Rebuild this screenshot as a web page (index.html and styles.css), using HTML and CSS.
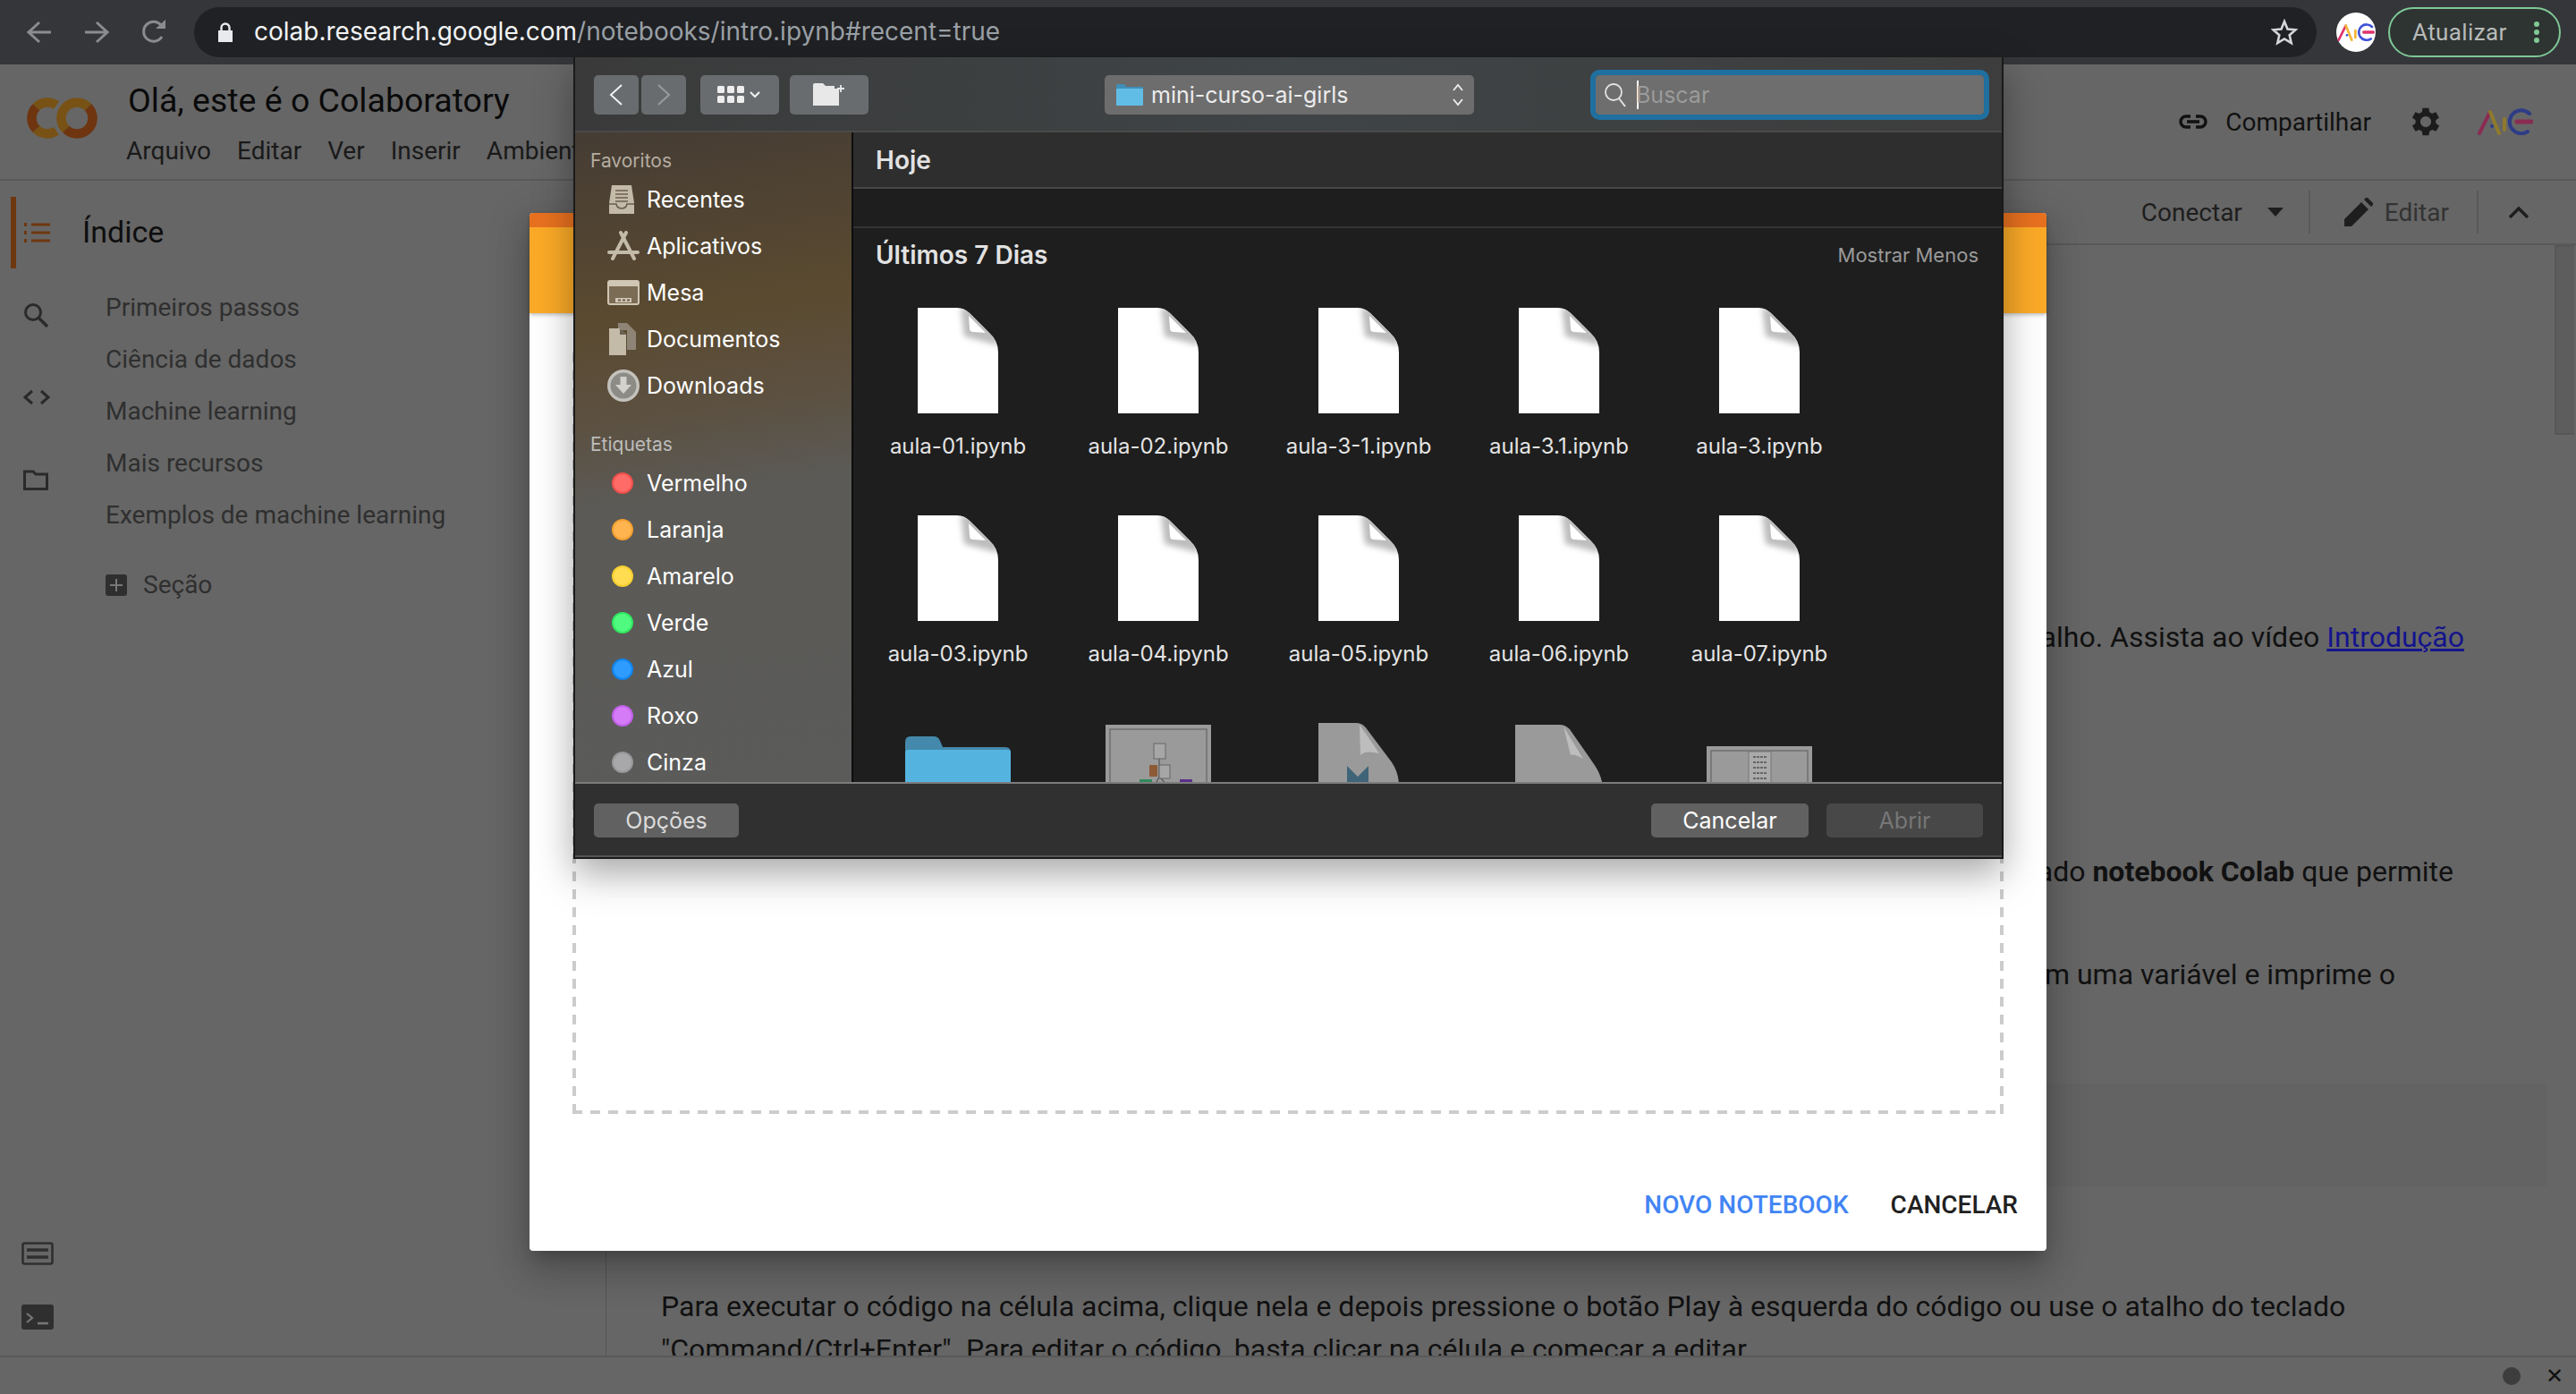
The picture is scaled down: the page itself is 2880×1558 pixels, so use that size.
FILE: index.html
```html
<!DOCTYPE html>
<html lang="pt-BR">
<head>
  <meta charset="UTF-8" />
  <title>Olá, este é o Colaboratory</title>
  <link rel="stylesheet" href="styles.css">
</head>
<body>

  <svg class="defs" width="0" height="0">
    <defs>
      <filter id="soft" x="-30%" y="-30%" width="160%" height="160%"><feGaussianBlur stdDeviation="3"/></filter>
      <clipPath id="docclip"><path d="M0 0H44Q52 0 58 6L80 28Q90 37 90 50V118H0Z"/></clipPath>
    </defs>
    <symbol id="doc" viewBox="0 0 90 118">
      <path d="M0 0H44Q52 0 58 6L80 28Q90 37 90 50V118H0Z" fill="#fff"/>
      <g clip-path="url(#docclip)"><path d="M48 0L52 32L90 42V28L60 0Z" fill="#bdbdbd" filter="url(#soft)"/></g>
      <path d="M57 9L76 28L62 27Q58 27 58 23Z" fill="#fff"/>
    </symbol>
    <symbol id="aic" viewBox="0 0 62 30">
      <path d="M2 28L14 4" fill="none" stroke="var(--a1)" stroke-width="4" stroke-linecap="round"/>
      <path d="M14 4L24 28" fill="none" stroke="var(--a2)" stroke-width="4" stroke-linecap="round"/>
      <circle cx="16" cy="20" r="2" fill="var(--a3)"/>
      <path d="M30 12V24" stroke="var(--a2)" stroke-width="4" stroke-linecap="round"/>
      <path d="M58 6A13 13 0 1 0 56 26" fill="none" stroke="var(--a3)" stroke-width="4" stroke-linecap="round"/>
      <path d="M44 15H60" stroke="var(--a1)" stroke-width="5" stroke-linecap="round"/>
    </symbol>
  </svg>

  <!-- browser bar -->
  <div class="browser-bar">
    <svg class="nav-icon" width="28" height="26" viewBox="0 0 28 26"><path d="M14 2L2 13L14 24M2 13H27"/></svg>
    <svg class="nav-icon" width="28" height="26" viewBox="0 0 28 26"><path d="M14 2L26 13L14 24M26 13H1"/></svg>
    <svg class="nav-icon" width="28" height="28" viewBox="0 0 28 28"><path d="M23 19A11 11 0 1 1 22 6"/><path class="nav-fill" d="M16 10H27V0Z"/></svg>
    <div class="omnibox">
      <svg class="lock" width="16" height="22" viewBox="0 0 16 22"><path d="M0 9H16V22H0Z" fill="#e8eaed"/><path d="M3.500 9V6A4.500 4.500 0 0 1 12.500 6V9" fill="none" stroke="#e8eaed" stroke-width="2.400"/></svg>
      <span class="url"><b>colab.research.google.com</b>/notebooks/intro.ipynb#recent=true</span>
      <svg class="star" width="30" height="30" viewBox="0 0 30 30"><path d="M15 3L18.500 11.500L27.500 12.300L20.700 18.200L22.700 27L15 22.400L7.300 27L9.300 18.200L2.500 12.300L11.500 11.500Z" fill="none" stroke="#d5d6d8" stroke-width="2.600"/></svg>
    </div>
    <div class="avatar">
      <svg class="aic-bright" width="42" height="20"><use href="#aic"/></svg>
    </div>
    <div class="update-pill">
      <span>Atualizar</span>
      <i class="dots"></i>
    </div>
  </div>

  <!-- notebook header -->
  <header class="nb-header">
    <svg class="co-logo" width="80" height="48" viewBox="0 0 80 48" fill="none" stroke-width="10.500">
      <path d="M10.600 11.600A17.500 17.500 0 0 0 10.600 36.400" stroke="#6e3510"/>
      <path d="M33 9.700A17.500 17.500 0 0 0 10.600 11.600M10.600 36.400A17.500 17.500 0 0 0 33 38.300" stroke="#785214"/>
      <path d="M68.400 11.600A17.500 17.500 0 0 1 43.600 36.400" stroke="#6e3510"/>
      <path d="M43.600 36.400A17.500 17.500 0 0 1 68.400 11.600" stroke="#785214"/>
    </svg>
    <div class="nb-title">
      <div class="nb-name">Olá, este é o Colaboratory</div>
      <nav class="nb-menu">
        <span>Arquivo</span>
        <span>Editar</span>
        <span>Ver</span>
        <span>Inserir</span>
        <span>Ambiente de execução</span>
      </nav>
    </div>
    <div class="nb-actions">
      <svg class="link-icon" width="34" height="18" viewBox="0 0 34 18"><path d="M14 3H9A6 6 0 0 0 9 15H14M20 3H25A6 6 0 0 1 25 15H20M10 9H24" fill="none" stroke="#111" stroke-width="3.400"/></svg>
      <span class="share">Compartilhar</span>
      <svg class="gear" width="42" height="42" viewBox="0 0 24 24"><path fill="#1c1c1c" d="M19.400 13a7.500 7.500 0 0 0 0-2l2.100-1.600-2-3.500-2.500 1a7.300 7.300 0 0 0-1.700-1L15 3.300h-4l-.4 2.600a7.300 7.300 0 0 0-1.700 1l-2.500-1-2 3.500L6.500 11a7.500 7.500 0 0 0 0 2l-2.100 1.600 2 3.500 2.500-1c.5.400 1.100.700 1.700 1l.4 2.600h4l.4-2.600c.6-.3 1.200-.6 1.700-1l2.500 1 2-3.500zM13 15.500a3.500 3.500 0 1 1 0-7 3.500 3.500 0 0 1 0 7z" transform="translate(-1 0)"/></svg>
      <svg class="aic-dim" width="62" height="30"><use href="#aic"/></svg>
    </div>
  </header>

  <!-- notebook body -->
  <div class="nb-main">
    <aside class="side">
      <i class="side-marker"></i>
      <div class="side-rail">
        <svg class="rail-list" width="30" height="24" viewBox="0 0 30 24"><path d="M9 3H30M9 12H30M9 21H30" stroke="#6e370f" stroke-width="3"/><path d="M1 3H4M1 12H4M1 21H4" stroke="#6e370f" stroke-width="4"/></svg>
        <svg class="rail-search" width="28" height="28" viewBox="0 0 28 28"><circle cx="11" cy="11" r="8.500" fill="none" stroke="#2a2a2a" stroke-width="3"/><path d="M17 17L27 27" stroke="#2a2a2a" stroke-width="3.400"/></svg>
        <svg class="rail-code" width="30" height="18" viewBox="0 0 30 18"><path d="M10 2L2 9L10 16M20 2L28 9L20 16" fill="none" stroke="#2a2a2a" stroke-width="3"/></svg>
        <svg class="rail-folder" width="28" height="24" viewBox="0 0 28 24"><path d="M1.500 3H11L14 6H26.500V22.500H1.500Z" fill="none" stroke="#2a2a2a" stroke-width="3"/></svg>
        <svg class="rail-snip" width="36" height="26" viewBox="0 0 36 26"><rect x="1.500" y="1.500" width="33" height="23" rx="2" fill="none" stroke="#2f2f2f" stroke-width="2.600"/><path d="M6 9H30M6 17H30" stroke="#2f2f2f" stroke-width="3.400"/></svg>
        <svg class="rail-term" width="36" height="28" viewBox="0 0 36 28"><rect width="36" height="28" rx="3" fill="#2f2f2f"/><path d="M6 10L12 15L6 20" fill="none" stroke="#777" stroke-width="2.200"/><path d="M18 21H30" stroke="#777" stroke-width="2.600"/></svg>
      </div>
      <div class="toc">
        <div class="toc-head">Índice</div>
        <div class="toc-item">Primeiros passos</div>
        <div class="toc-item">Ciência de dados</div>
        <div class="toc-item">Machine learning</div>
        <div class="toc-item">Mais recursos</div>
        <div class="toc-item">Exemplos de machine learning</div>
        <div class="toc-add"><i class="plus-box"></i>Seção</div>
      </div>
    </aside>

    <div class="nb-right">
      <!-- notebook toolbar -->
      <div class="nb-toolbar">
        <span class="connect">Conectar</span>
        <i class="caret"></i>
        <i class="tool-sep"></i>
        <svg class="pencil" width="32" height="32" viewBox="0 0 32 32"><path fill="#1e1e1e" d="M0 32V24L19 5L27 13L8 32ZM22 2L24 0Q25 -1 26 0L32 6Q33 7 32 8L30 10Z"/></svg>
        <span class="edit">Editar</span>
        <i class="tool-sep sep-last"></i>
        <svg class="chev-up" width="24" height="14" viewBox="0 0 24 14"><path d="M2 13L12 3L22 13" fill="none" stroke="#1e1e1e" stroke-width="3.400"/></svg>
      </div>

      <section class="cells">
        <i class="scroll-thumb"></i>
        <p class="line end-a">Para começar a trabalhar, leia este cabeçalho. Assista ao vídeo <a href="#">Introdução</a></p>
        <p class="line end-b">Por exemplo, este é um ambiente interativo chamado <b>notebook Colab</b> que permite</p>
        <p class="line end-c">A célula de código abaixo armazena o resultado em uma variável e imprime o</p>
        <div class="code-cell"></div>
        <p class="line para">Para executar o código na célula acima, clique nela e depois pressione o botão Play à esquerda do código ou use o atalho do teclado</p>
        <p class="line para">"Command/Ctrl+Enter". Para editar o código, basta clicar na célula e começar a editar.</p>
      </section>
    </div>
  </div>

  <footer class="nb-footer">
    <i class="status-dot"></i>
    <span class="status-x">✕</span>
  </footer>

  <!-- colab open dialog -->
  <div class="colab-dialog">
    <div class="colab-head"></div>
    <div class="drop-area"></div>
    <div class="colab-actions">
      <span class="act-new">NOVO NOTEBOOK</span>
      <span class="act-cancel">CANCELAR</span>
    </div>
  </div>

  <!-- mac file picker -->
  <div class="picker">
    <div class="picker-bar">
      <button class="mac-btn btn-nav"><svg width="16" height="26" viewBox="0 0 16 26"><path d="M14 2L2 13L14 24" fill="none" stroke="#f0f0f0" stroke-width="2"/></svg></button>
      <button class="mac-btn btn-nav btn-next"><svg width="16" height="26" viewBox="0 0 16 26"><path d="M2 2L14 13L2 24" fill="none" stroke="#9a9a9a" stroke-width="2"/></svg></button>
      <button class="mac-btn btn-view">
        <svg width="50" height="20" viewBox="0 0 50 20"><g fill="#eee"><rect width="8" height="8" rx="1.500"/><rect x="11" width="8" height="8" rx="1.500"/><rect x="22" width="8" height="8" rx="1.500"/><rect y="11" width="8" height="8" rx="1.500"/><rect x="11" y="11" width="8" height="8" rx="1.500"/><rect x="22" y="11" width="8" height="8" rx="1.500"/></g><path d="M37 7L42 12L47 7" fill="none" stroke="#eee" stroke-width="2.200"/></svg>
      </button>
      <button class="mac-btn btn-newdir">
        <svg width="36" height="26" viewBox="0 0 36 26"><path d="M0 2Q0 0 2 0H11L14 3H24V6H29V25H0Z" fill="#e8e8e8"/><path d="M31 2V10M27 6H35" stroke="#e8e8e8" stroke-width="1.800"/></svg>
      </button>
      <div class="path-pop">
        <svg width="30" height="24" viewBox="0 0 30 24"><path d="M0 2Q0 0 2 0H9L11 3H30V24H0Z" fill="#3f8fb8"/><rect y="5" width="30" height="19" rx="1" fill="#62bde6"/></svg>
        <span>mini-curso-ai-girls</span>
        <svg class="pop-arrows" width="14" height="28" viewBox="0 0 14 28"><path d="M2 9L7 3L12 9M2 19L7 25L12 19" fill="none" stroke="#eee" stroke-width="1.800"/></svg>
      </div>
      <div class="search-box">
        <svg width="26" height="28" viewBox="0 0 26 28"><circle cx="11" cy="11" r="9" fill="none" stroke="#e4e4e4" stroke-width="1.800"/><path d="M17 18L24 27" stroke="#e4e4e4" stroke-width="2"/></svg>
        <i class="caret-line"></i>
        <span>Buscar</span>
      </div>
    </div>

    <div class="picker-body">
      <div class="fin-side">
        <div class="side-label">Favoritos</div>
        <div class="side-row">
          <svg width="32" height="32" viewBox="0 0 32 32"><path d="M5 0H27L30 20V32H2V20Z" fill="#c4baa8"/><path d="M9 6H23M9 10H23M9 14H23M9 18H23" stroke="#6b5f4f" stroke-width="1.600"/><path d="M2 21H10Q11 26 16 26Q21 26 22 21H30" fill="none" stroke="#6b5f4f" stroke-width="1.600"/></svg>
          Recentes
        </div>
        <div class="side-row">
          <svg width="36" height="34" viewBox="0 0 36 34"><path d="M15 2L30 31M21 2L6 31" stroke="#c4baa8" stroke-width="4" stroke-linecap="round"/><path d="M2 24H34" stroke="#c4baa8" stroke-width="4" stroke-linecap="round"/></svg>
          Aplicativos
        </div>
        <div class="side-row">
          <svg width="36" height="28" viewBox="0 0 36 28"><rect x="1" y="1" width="34" height="26" rx="2" fill="#7b6c55" stroke="#d0c6b4" stroke-width="2"/><path d="M1 1H35V7H1Z" fill="#d0c6b4"/><path d="M9 20H27V25H9Z" fill="#d0c6b4"/><path d="M12 22.500H15M17 22.500H20M22 22.500H25" stroke="#6a5c48" stroke-width="2"/></svg>
          Mesa
        </div>
        <div class="side-row">
          <svg width="32" height="36" viewBox="0 0 32 36"><path d="M12 0H22L32 10V30H22V8H12Z" fill="#8e8476"/><path d="M2 6H14L21 13V36H2Z" fill="#c4baa8"/><path d="M14 6V13H21" fill="#6b5f4f"/></svg>
          Documentos
        </div>
        <div class="side-row">
          <svg width="36" height="36" viewBox="0 0 36 36"><circle cx="18" cy="18" r="18" fill="#c4c2bc"/><circle cx="18" cy="18" r="14.500" fill="#8d8b86"/><path d="M14.500 8H21.500V17H27L18 27L9 17H14.500Z" fill="#d4d2cc"/></svg>
          Downloads
        </div>
        <div class="side-label label-tags">Etiquetas</div>
        <div class="side-row"><i class="tag tag-red"></i>Vermelho</div>
        <div class="side-row"><i class="tag tag-orange"></i>Laranja</div>
        <div class="side-row"><i class="tag tag-yellow"></i>Amarelo</div>
        <div class="side-row"><i class="tag tag-green"></i>Verde</div>
        <div class="side-row"><i class="tag tag-blue"></i>Azul</div>
        <div class="side-row"><i class="tag tag-purple"></i>Roxo</div>
        <div class="side-row"><i class="tag tag-grey"></i>Cinza</div>
      </div>

      <div class="fin-main">
        <div class="group-head today">Hoje</div>
        <div class="group-gap"></div>
        <div class="group-head week">Últimos 7 Dias <span>Mostrar Menos</span></div>
        <div class="file-grid">
          <div class="file"><svg width="90" height="118"><use href="#doc"/></svg><span>aula-01.ipynb</span></div>
          <div class="file"><svg width="90" height="118"><use href="#doc"/></svg><span>aula-02.ipynb</span></div>
          <div class="file"><svg width="90" height="118"><use href="#doc"/></svg><span>aula-3-1.ipynb</span></div>
          <div class="file"><svg width="90" height="118"><use href="#doc"/></svg><span>aula-3.1.ipynb</span></div>
          <div class="file"><svg width="90" height="118"><use href="#doc"/></svg><span>aula-3.ipynb</span></div>
          <div class="file"><svg width="90" height="118"><use href="#doc"/></svg><span>aula-03.ipynb</span></div>
          <div class="file"><svg width="90" height="118"><use href="#doc"/></svg><span>aula-04.ipynb</span></div>
          <div class="file"><svg width="90" height="118"><use href="#doc"/></svg><span>aula-05.ipynb</span></div>
          <div class="file"><svg width="90" height="118"><use href="#doc"/></svg><span>aula-06.ipynb</span></div>
          <div class="file"><svg width="90" height="118"><use href="#doc"/></svg><span>aula-07.ipynb</span></div>
          <div class="file">
            <svg width="118" height="118" viewBox="0 0 118 118"><path d="M0 30V21Q0 15 6 15H32Q37 15 39 20L42 27H112Q118 27 118 33V50H0Z" fill="#4489ab"/><rect y="30" width="118" height="88" rx="3" fill="#55b3e0"/></svg>
          </div>
          <div class="file">
            <svg width="118" height="118" viewBox="0 0 118 118"><rect y="2" width="118" height="116" fill="#9a9a9a"/><rect x="5" y="7" width="108" height="111" fill="none" stroke="#6f6f6f" stroke-width="1.500"/><path d="M60 35V60L45 90M60 60L88 90" stroke="#555" stroke-width="1.200" fill="none"/><rect x="54" y="23" width="13" height="17" fill="#a6a6a6" stroke="#666"/><rect x="49" y="47" width="9" height="13" fill="#8d5a36"/><rect x="60" y="47" width="12" height="15" fill="#a6a6a6" stroke="#666"/><rect x="38" y="63" width="14" height="16" fill="#2f8a5c"/><rect x="83" y="63" width="14" height="16" fill="#5a2f8a"/><rect x="25" y="77" width="13" height="14" fill="#2f8a5c"/><rect x="57" y="77" width="14" height="14" fill="#8a70a8"/><rect x="77" y="77" width="11" height="14" fill="#8a70a8"/><rect x="90" y="78" width="9" height="13" fill="#5a2f8a"/></svg>
          </div>
          <div class="file">
            <svg width="90" height="118" viewBox="0 0 90 118"><path d="M0 0H42Q50 0 55 8L82 44Q90 56 90 70V118H0Z" fill="#9a9a9a"/><path d="M46 2L68 34Q52 30 47 36Z" fill="#bdbdbd"/><path d="M32 48L44 60L56 48V88H72L66 96H26L20 88H32Z" fill="#3f6478"/></svg>
          </div>
          <div class="file">
            <svg width="98" height="118" viewBox="0 0 98 118"><path d="M0 2H50Q58 2 63 10L88 46Q98 60 98 76V118H0Z" fill="#9a9a9a"/><path d="M54 4L76 40Q66 34 62 36Z" fill="#bdbdbd"/></svg>
          </div>
          <div class="file">
            <svg width="118" height="118" viewBox="0 0 118 118"><rect y="26" width="118" height="92" fill="#9a9a9a"/><rect x="5" y="31" width="108" height="87" fill="none" stroke="#6f6f6f" stroke-width="1.500"/><rect x="47" y="32" width="25" height="38" fill="#aaa" stroke="#777"/><path d="M52 38H67M52 44H67M52 50H67M52 56H67M52 62H67" stroke="#666" stroke-width="2" stroke-dasharray="3 1"/><rect x="34" y="70" width="24" height="26" fill="#aaa" stroke="#777"/><rect x="62" y="70" width="24" height="26" fill="#aaa" stroke="#777"/></svg>
          </div>
        </div>
      </div>
    </div>

    <div class="picker-foot">
      <button class="mac-btn foot-btn">Opções</button>
      <button class="mac-btn foot-btn btn-cancel">Cancelar</button>
      <button class="mac-btn foot-btn btn-open">Abrir</button>
    </div>
  </div>

</body>
</html>
```

FILE: styles.css
```css
html, body {
  margin: 0;
  height: 100%;
}
body {
  position: relative;
  display: flex;
  flex-direction: column;
  width: 2880px;
  height: 1558px;
  overflow: hidden;
  background: #666;
  color: #111;
  font-family: Roboto, "Liberation Sans", sans-serif;
}
i {
  display: block;
}
svg {
  display: block;
  flex: none;
}
.defs {
  position: absolute;
}

/* browser bar */
.browser-bar {
  display: flex;
  align-items: center;
  flex: none;
  height: 72px;
  box-sizing: border-box;
  padding-left: 30px;
  background: #35363a;
}
.nav-icon {
  margin-right: 36px;
  fill: none;
  stroke: #8b8c8f;
  stroke-width: 3;
}
.nav-icon .nav-fill {
  fill: #8b8c8f;
  stroke: none;
}
.nav-icon:nth-child(3) {
  margin-right: 31px;
}
.omnibox {
  display: flex;
  align-items: center;
  width: 2373px;
  height: 56px;
  border-radius: 28px;
  background: #202124;
  color: #9aa0a6;
  font-family: Inter, Roboto, sans-serif;
  font-size: 28px;
}
.lock {
  margin-left: 27px;
  margin-right: 24px;
}
.url {
  flex: 1;
  margin-top: -2px;
}
.url b {
  font-weight: 400;
  color: #f1f3f4;
}
.star {
  margin-right: 21px;
}
.avatar {
  display: flex;
  align-items: center;
  justify-content: center;
  width: 44px;
  height: 44px;
  margin-left: 22px;
  border-radius: 50%;
  background: #fff;
  --a1: #e0336e;
  --a2: #f2b632;
  --a3: #3f51d8;
}
.aic-dim {
  --a1: #8a2c52;
  --a2: #8f7a2c;
  --a3: #2e3c86;
}
.update-pill {
  display: flex;
  align-items: center;
  justify-content: space-between;
  box-sizing: border-box;
  width: 193px;
  height: 56px;
  margin-left: 14px;
  padding: 0 22px 0 25px;
  border: 2px solid #7fc796;
  border-radius: 28px;
  background: #2d3432;
  color: #b8bab9;
  font-size: 26px;
  letter-spacing: .4px;
}
.dots {
  width: 6px;
  height: 6px;
  margin-bottom: 18px;
  border-radius: 50%;
  background: #81c995;
  box-shadow: 0 9px 0 #81c995, 0 18px 0 #81c995;
}

/* notebook header */
.nb-header {
  display: flex;
  flex: none;
  box-sizing: border-box;
  height: 130px;
  border-bottom: 2px solid #595959;
}
.co-logo {
  margin: 36px 33px 0 30px;
}
.nb-title {
  padding-top: 18px;
}
.nb-name {
  height: 44px;
  font-size: 37.500px;
  line-height: 44px;
  color: #0a0a0a;
}
.nb-menu {
  display: flex;
  gap: 29px;
  margin-top: 17px;
  margin-left: -2px;
  font-size: 28px;
  line-height: 36px;
  color: #1a1a1a;
  white-space: nowrap;
}
.nb-actions {
  display: flex;
  align-items: center;
  margin-left: auto;
  padding-right: 48px;
}
.link-icon {
  margin-right: 19px;
}
.share {
  margin-right: 40px;
  font-size: 28px;
}
.aic-dim {
  margin-left: 37px;
}

/* notebook toolbar */
.nb-toolbar {
  display: flex;
  align-items: center;
  justify-content: flex-end;
  flex: none;
  box-sizing: border-box;
  height: 72px;
  padding-right: 52px;
  border-bottom: 2px solid #595959;
  font-size: 28px;
}
.connect {
  color: #1e1e1e;
}
.caret {
  width: 0;
  height: 0;
  margin: 0 28px 0 28px;
  border: 9px solid transparent;
  border-top: 10px solid #1e1e1e;
  border-bottom: 0;
}
.tool-sep {
  width: 2px;
  height: 48px;
  background: #595959;
}
.pencil {
  margin-left: 38px;
  margin-right: 13px;
}
.edit {
  color: #333;
}
.sep-last {
  margin-left: 31px;
  margin-right: 33px;
}

/* main area */
.nb-main {
  display: flex;
  flex: 1;
  min-height: 0;
}
.nb-right {
  display: flex;
  flex-direction: column;
  flex: 1;
  min-width: 0;
}
.side {
  position: relative;
  display: flex;
  flex: none;
  width: 678px;
  box-sizing: border-box;
  border-right: 1px solid #555;
}
.side-marker {
  position: absolute;
  left: 12px;
  top: 18px;
  width: 6px;
  height: 80px;
  background: #6e370f;
}
.side-rail {
  position: relative;
  width: 92px;
  flex: none;
}
.side-rail svg {
  position: absolute;
  left: 26px;
}
.rail-list { top: 46px; }
.rail-search { top: 136px; }
.rail-code { top: 233px; }
.rail-folder { top: 322px; }
.side-rail .rail-snip { top: 1186px; left: 24px; }
.side-rail .rail-term { top: 1256px; left: 24px; }
.toc {
  flex: 1;
  padding-top: 34px;
}
.toc-head {
  height: 46px;
  margin-bottom: 46px;
  font-size: 34px;
  line-height: 46px;
  color: #0e0e0e;
}
.toc-item {
  height: 58px;
  margin-left: 26px;
  font-size: 28px;
  line-height: 32px;
  color: #2f2f2f;
}
.toc-add {
  display: flex;
  align-items: center;
  gap: 18px;
  margin-top: 20px;
  margin-left: 26px;
  font-size: 28px;
  line-height: 32px;
  color: #2f2f2f;
}
.plus-box {
  position: relative;
  width: 24px;
  height: 24px;
  border-radius: 3px;
  background: #2f2f2f;
}
.plus-box::before {
  content: "";
  position: absolute;
  left: 5px;
  top: 11px;
  width: 14px;
  height: 2px;
  background: #777;
}
.plus-box::after {
  content: "";
  position: absolute;
  left: 11px;
  top: 5px;
  width: 2px;
  height: 14px;
  background: #777;
}

/* cells behind the dialogs */
.cells {
  position: relative;
  flex: 1;
  min-height: 0;
  overflow: hidden;
}
.scroll-thumb {
  position: absolute;
  right: 2px;
  top: 0;
  box-sizing: border-box;
  width: 22px;
  height: 212px;
  border: 2px solid #575757;
  border-right: 0;
  background: #5d5d5d;
}
.line {
  margin: 0;
  font-size: 32px;
  line-height: 46px;
  color: #111;
  white-space: nowrap;
  text-align: right;
}
.line a {
  color: #14148c;
}
.end-a {
  margin-top: 415px;
  padding-right: 125px;
}
.end-b {
  margin-top: 216px;
  padding-right: 137px;
}
.end-c {
  margin-top: 69px;
  padding-right: 202px;
}
.code-cell {
  height: 115px;
  margin: 99px 33px 110px 0;
  background: #636363;
}
.para {
  padding-left: 61px;
  line-height: 48px;
  text-align: left;
}

/* footer */
.nb-footer {
  display: flex;
  align-items: center;
  justify-content: flex-end;
  flex: none;
  box-sizing: border-box;
  height: 43px;
  padding-right: 14px;
  border-top: 2px solid #595959;
}
.status-dot {
  width: 20px;
  height: 20px;
  margin-right: 28px;
  border-radius: 50%;
  background: #3d3d3d;
}
.status-x {
  font-size: 24px;
  color: #111;
}

/* colab dialog */
.colab-dialog {
  position: absolute;
  left: 592px;
  top: 238px;
  display: flex;
  flex-direction: column;
  width: 1696px;
  height: 1160px;
  border-radius: 4px;
  background: #fff;
  box-shadow: 0 11px 15px -7px rgba(0, 0, 0, .2), 0 24px 38px 3px rgba(0, 0, 0, .14), 0 9px 46px 8px rgba(0, 0, 0, .12);
}
.colab-head {
  flex: none;
  height: 96px;
  border-top: 16px solid #e8711f;
  border-radius: 4px 4px 0 0;
  background: #fbaa27;
  box-shadow: 0 2px 4px rgba(0, 0, 0, .25);
}
.drop-area {
  flex: 1;
  margin: 40px 48px 0;
  background:
    repeating-linear-gradient(90deg, #ccc 0 11px, transparent 11px 20px) left bottom / 100% 4px no-repeat,
    repeating-linear-gradient(0deg, #ccc 0 11px, transparent 11px 20px) left bottom / 4px 100% no-repeat,
    repeating-linear-gradient(0deg, #ccc 0 11px, transparent 11px 20px) right bottom / 4px 100% no-repeat;
}
.colab-actions {
  display: flex;
  justify-content: flex-end;
  gap: 47px;
  flex: none;
  height: 153px;
  box-sizing: border-box;
  padding: 85px 32px 0 0;
  font-size: 28px;
  font-weight: 500;
  line-height: 34px;
}
.act-new {
  color: #4285f4;
}
.act-cancel {
  color: #212121;
}

/* mac file picker */
.picker {
  position: absolute;
  left: 641px;
  top: 64px;
  display: flex;
  flex-direction: column;
  box-sizing: border-box;
  width: 1599px;
  height: 896px;
  border: 2px solid #1a1a1a;
  border-top: 0;
  background: #1e1e1e;
  box-shadow: 0 16px 40px rgba(0, 0, 0, .35);
  font-family: Inter, Roboto, sans-serif;
}
.picker-bar {
  display: flex;
  align-items: center;
  flex: none;
  box-sizing: border-box;
  height: 84px;
  padding: 2px 0 0 21px;
  border-bottom: 2px solid #4a4a48;
  background: linear-gradient(90deg, #3a3a3a, #3f4446 50%, #3d3d3d);
}
.mac-btn {
  display: flex;
  align-items: center;
  justify-content: center;
  height: 44px;
  padding: 0;
  border: 0;
  border-radius: 5px;
  background: #696c6e;
  font-family: inherit;
}
.btn-nav {
  width: 50px;
}
.btn-next {
  margin-left: 3px;
}
.btn-view {
  width: 88px;
  margin-left: 16px;
}
.btn-newdir {
  width: 88px;
  margin-left: 12px;
}
.path-pop {
  display: flex;
  align-items: center;
  box-sizing: border-box;
  width: 413px;
  height: 44px;
  margin-left: 264px;
  padding-left: 13px;
  border-radius: 5px;
  background: #6d6d6d;
  color: #ececec;
  font-size: 25px;
}
.path-pop span {
  flex: 1;
  margin-left: 9px;
}
.pop-arrows {
  margin-right: 11px;
}
.search-box {
  display: flex;
  align-items: center;
  box-sizing: border-box;
  width: 434px;
  height: 44px;
  margin-left: 136px;
  padding-left: 9px;
  border-radius: 4px;
  background: #6e6e6e;
  outline: 6px solid #1f6f9f;
  color: #9b9b9b;
  font-size: 25px;
}
.caret-line {
  width: 2px;
  height: 32px;
  margin-left: 11px;
  margin-right: -3px;
  background: #fff;
}
.picker-body {
  display: flex;
  flex: 1;
  min-height: 0;
  overflow: hidden;
}

/* picker sidebar */
.fin-side {
  flex: none;
  box-sizing: border-box;
  width: 311px;
  padding-top: 18px;
  border-right: 2px solid #0d0d0d;
  background: linear-gradient(172deg, #453c34 0%, #5a4a30 28%, #5c5040 42%, #5b5a56 55%, #5b5b5a 100%);
  color: #fff;
  font-size: 25px;
}
.side-label {
  height: 28px;
  margin-bottom: 3px;
  padding-left: 17px;
  color: #b5ada2;
  font-size: 21px;
  line-height: 28px;
}
.label-tags {
  margin-top: 26px;
  color: #bdbdbb;
}
.side-row {
  position: relative;
  display: flex;
  align-items: center;
  height: 52px;
  padding-left: 80px;
}
.side-row svg {
  position: absolute;
  left: 36px;
  top: 50%;
  transform: translateY(-50%);
}
.tag {
  position: absolute;
  left: 41px;
  top: 14px;
  box-sizing: border-box;
  width: 24px;
  height: 24px;
  border: 2px solid;
  border-radius: 50%;
}
.tag-red { background: #ff6b66; border-color: #f2504c; }
.tag-orange { background: #ffb450; border-color: #f5a030; }
.tag-yellow { background: #ffdc50; border-color: #f5cf30; }
.tag-green { background: #50fa7e; border-color: #30e860; }
.tag-blue { background: #2e9bff; border-color: #0f84ef; }
.tag-purple { background: #d57bf8; border-color: #c060e6; }
.tag-grey { background: #a8a8aa; border-color: #98989a; }

/* picker file area */
.fin-main {
  flex: 1;
  min-width: 0;
  background: #1e1e1e;
}
.group-head {
  display: flex;
  align-items: center;
  justify-content: space-between;
  padding: 0 26px 0 25px;
  color: #e2e2e2;
  font-size: 28px;
  font-weight: 600;
}
.group-head span {
  color: #9a9a9a;
  font-size: 22px;
  font-weight: 400;
}
.today {
  height: 61px;
  border-bottom: 2px solid #474747;
  background: #2e2e2e;
}
.group-gap {
  height: 42px;
  border-bottom: 2px solid #333;
}
.week {
  height: 60px;
}
.file-grid {
  display: grid;
  grid-template-columns: repeat(5, 224px);
  grid-auto-rows: 232px;
  margin-top: 29px;
  padding-left: 5px;
}
.file {
  display: flex;
  flex-direction: column;
  align-items: center;
  color: #e4e4e4;
  font-size: 24px;
}
.file span {
  margin-top: 19px;
  line-height: 36px;
}

/* picker footer */
.picker-foot {
  display: flex;
  align-items: center;
  flex: none;
  box-sizing: border-box;
  height: 84px;
  padding: 2px 21px 0;
  border-top: 2px solid #7c7c7c;
  border-bottom: 2px solid #555;
  background: #303030;
}
.foot-btn {
  width: 162px;
  height: 38px;
  background: #616161;
  color: #dcdcdc;
  font-size: 25px;
}
.btn-cancel {
  width: 176px;
  margin-left: auto;
  color: #fff;
}
.btn-open {
  width: 175px;
  margin-left: 20px;
  background: #484848;
  color: #777;
}
```
